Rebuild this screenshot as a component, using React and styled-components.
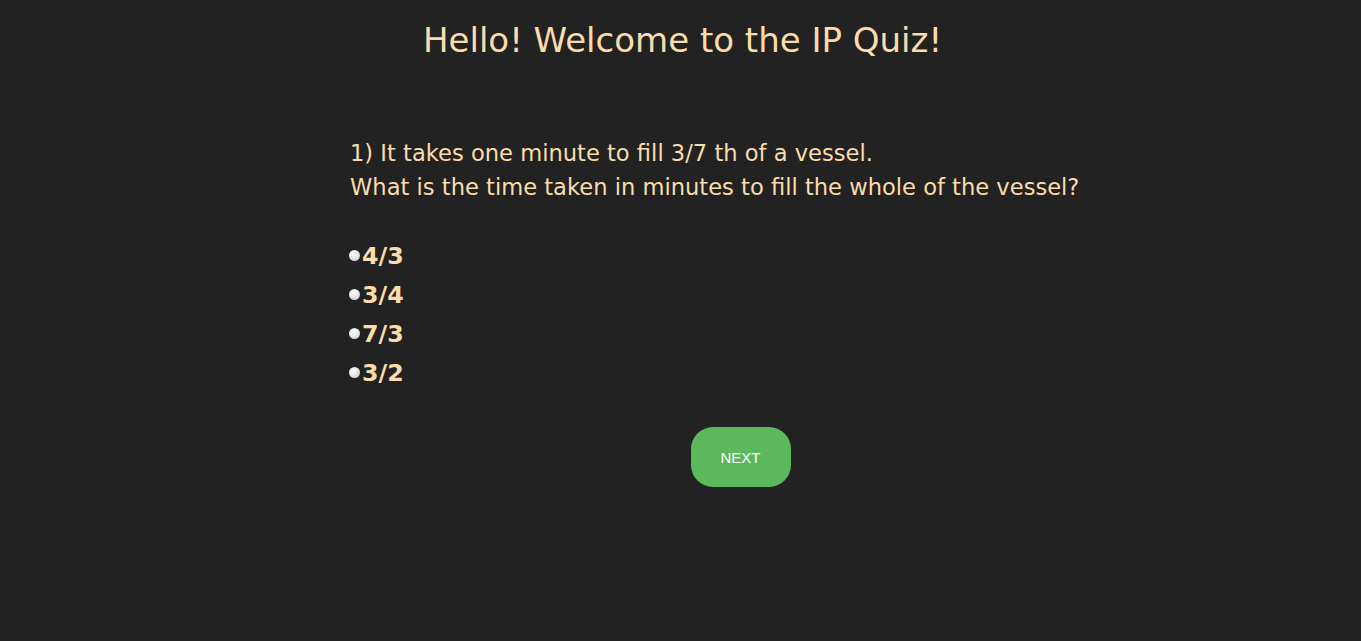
import React, { useState } from 'react';
import styled, { createGlobalStyle } from 'styled-components';

const GlobalStyle = createGlobalStyle`
  html, body {
    margin: 0;
    padding: 0;
    background: #222222;
  }
  body {
    font-family: "Comic Sans MS", "DejaVu Sans", sans-serif;
    color: #fadcaa;
  }
`;

const Page = styled.div`
  min-height: 641px;
  background: #222222;
  overflow: hidden;
`;

const Title = styled.h1`
  margin: 0 0 0 4px;
  padding-top: 18px;
  text-align: center;
  font-size: 34px;
  font-weight: normal;
  line-height: 44px;
  color: #fadcaa;
`;

const Quiz = styled.div`
  margin: 74px 0 0 350px;
  width: 781px;
`;

const Question = styled.p`
  margin: 0;
  font-size: 22.6px;
  line-height: 34px;
`;

const Options = styled.ul`
  list-style: none;
  margin: 32px 0 0;
  padding: 0;
`;

const Option = styled.li`
  display: flex;
  align-items: center;
  height: 39px;
  font-size: 23.7px;
  font-weight: bold;
  cursor: pointer;
`;

const Radio = styled.span`
  width: 11px;
  height: 11px;
  margin: 0 2px 0 -1px;
  border-radius: 50%;
  background: radial-gradient(circle at 40% 35%, #ffffff 0%, #e2e2e2 55%, #b8b8b8 100%);
  box-shadow: ${p => (p.checked ? 'inset 0 0 0 3px #5cb85c' : 'none')};
`;

const Footer = styled.div`
  display: flex;
  justify-content: center;
  margin-top: 35px;
`;

const NextButton = styled.button`
  width: 100px;
  height: 60px;
  border: none;
  border-radius: 22px;
  background: #5cb85c;
  color: #ffffff;
  font-family: "Liberation Sans", Arial, sans-serif;
  font-size: 15px;
  cursor: pointer;
`;

const options = ['4/3', '3/4', '7/3', '3/2'];

export default function App() {
  const [picked, setPicked] = useState(null);

  return (
    <Page>
      <GlobalStyle />
      <Title>Hello! Welcome to the IP Quiz!</Title>
      <Quiz>
        <Question>
          1) It takes one minute to fill 3/7 th of a vessel.
          <br />
          What is the time taken in minutes to fill the whole of the vessel?
        </Question>
        <Options>
          {options.map(o => (
            <Option key={o} onClick={() => setPicked(o)}>
              <Radio checked={picked === o} />
              {o}
            </Option>
          ))}
        </Options>
        <Footer>
          <NextButton>NEXT</NextButton>
        </Footer>
      </Quiz>
    </Page>
  );
}
